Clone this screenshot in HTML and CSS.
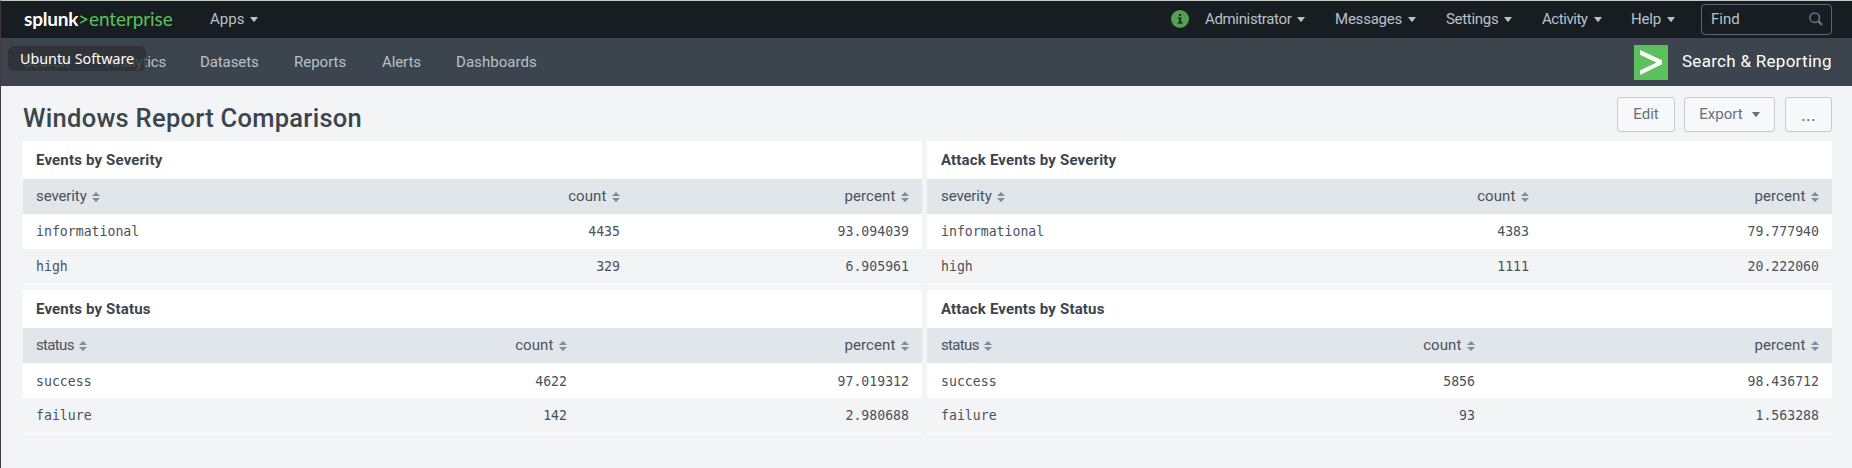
FILE: index.html
```html
<!DOCTYPE html>
<html lang="en">
<head>
<meta charset="utf-8">
<title>Windows Report Comparison</title>
<link rel="stylesheet" href="styles.css">
</head>
<body>
<svg class="defs" width="0" height="0">
  <symbol id="caret" viewBox="0 0 8 5"><path d="M0 0h8L4.6 4.6q-.6.6-1.2 0z"/></symbol>
  <symbol id="sort" viewBox="0 0 8 10"><path d="M0 4h8L4 0zM0 6h8L4 10z"/></symbol>
</svg>
<div class="page">
  <header class="topbar">
    <div class="logo"><span class="logo-brand">splunk</span><span class="logo-mark">&gt;</span><span class="logo-product">enterprise</span></div>
    <a class="menu m-apps"><span>Apps</span><svg class="caret"><use href="#caret"/></svg></a>
    <svg class="info" viewBox="0 0 18 18"><circle cx="9" cy="9" r="9" fill="#53a051"/><path d="M8 4h2.2v2H8zM6.8 7.3h3.5v5h1.2v1.4H6.7v-1.4h1.4V8.7H6.8z" fill="#20302a"/></svg>
    <a class="menu m-admin"><span>Administrator</span><svg class="caret"><use href="#caret"/></svg></a>
    <a class="menu m-messages"><span>Messages</span><svg class="caret"><use href="#caret"/></svg></a>
    <a class="menu m-settings"><span>Settings</span><svg class="caret"><use href="#caret"/></svg></a>
    <a class="menu m-activity"><span>Activity</span><svg class="caret"><use href="#caret"/></svg></a>
    <a class="menu m-help"><span>Help</span><svg class="caret"><use href="#caret"/></svg></a>
    <div class="find"><span>Find</span><svg class="lens" viewBox="0 0 14 14" fill="none" stroke="#6b7785"><circle cx="5.7" cy="5.7" r="4.8" stroke-width="1.5"/><path d="M9.2 9.2L13 13" stroke-width="2.4"/></svg></div>
  </header>
  <nav class="appbar">
    <a class="n-search">Search</a>
    <a class="n-analytics">Analytics</a>
    <a class="n-datasets">Datasets</a>
    <a class="n-reports">Reports</a>
    <a class="n-alerts">Alerts</a>
    <a class="n-dashboards">Dashboards</a>
    <svg class="app-icon" viewBox="0 0 34 35"><path d="M0 0h34v35H0z" fill="#5cc05c"/><path d="M6 5l22 10.3v4L6 30v-4.6l16.5-8L6 9.7z" fill="#fff"/></svg>
    <span class="app-name">Search &amp; Reporting</span>
  </nav>
  <div class="tooltip">Ubuntu Software</div>
  <main class="dashboard">
    <div class="heading">
      <h1>Windows Report Comparison</h1>
      <button class="btn b-edit">Edit</button>
      <button class="btn b-export"><span>Export</span><svg class="caret"><use href="#caret"/></svg></button>
      <button class="btn b-more">...</button>
    </div>
    <div class="panels">
      <section class="panel p-severity">
        <h2>Events by Severity</h2>
        <div class="row head"><span>severity<svg><use href="#sort"/></svg></span><span>count<svg><use href="#sort"/></svg></span><span>percent<svg><use href="#sort"/></svg></span></div>
        <div class="row"><span>informational</span><span>4435</span><span>93.094039</span></div>
        <div class="row alt"><span>high</span><span>329</span><span>6.905961</span></div>
      </section>
      <section class="panel right p-attack-severity">
        <h2>Attack Events by Severity</h2>
        <div class="row head"><span>severity<svg><use href="#sort"/></svg></span><span>count<svg><use href="#sort"/></svg></span><span>percent<svg><use href="#sort"/></svg></span></div>
        <div class="row"><span>informational</span><span>4383</span><span>79.777940</span></div>
        <div class="row alt"><span>high</span><span>1111</span><span>20.222060</span></div>
      </section>
      <section class="panel p-status">
        <h2>Events by Status</h2>
        <div class="row head"><span class="tight">status<svg><use href="#sort"/></svg></span><span>count<svg><use href="#sort"/></svg></span><span>percent<svg><use href="#sort"/></svg></span></div>
        <div class="row low"><span>success</span><span>4622</span><span>97.019312</span></div>
        <div class="row alt"><span>failure</span><span>142</span><span>2.980688</span></div>
      </section>
      <section class="panel right p-attack-status">
        <h2>Attack Events by Status</h2>
        <div class="row head"><span class="tight">status<svg><use href="#sort"/></svg></span><span>count<svg><use href="#sort"/></svg></span><span>percent<svg><use href="#sort"/></svg></span></div>
        <div class="row low"><span>success</span><span>5856</span><span>98.436712</span></div>
        <div class="row alt"><span>failure</span><span>93</span><span>1.563288</span></div>
      </section>
    </div>
  </main>
</div>
</body>
</html>
```

FILE: styles.css
```css
* { box-sizing: border-box; }
body { margin: 0; background: #f2f4f5; font: 15px/20px Roboto, sans-serif; color: #3c444d; }
.defs { position: absolute; }
.page { height: 468px; border-top: 1px solid #c3cbc4; border-left: 1px solid #44373b; overflow: hidden; position: relative; }

.topbar { display: flex; align-items: center; height: 37px; padding: 0 20px 0 22px; background: #171d21; color: #b9c1ca; }
.logo { display: flex; width: 187px; padding-bottom: 2px; font: 19px/24px Lato, sans-serif; white-space: nowrap; }
.logo-brand { width: 55px; padding-left: 1px; color: #fff; font-weight: 700; letter-spacing: -0.2px; }
.logo-mark { width: 11px; color: #5cc05c; }
.logo-product { color: #5cc05c; letter-spacing: -0.1px; }
.menu { display: flex; align-items: center; gap: 6px; white-space: nowrap; letter-spacing: -0.22px; }
.menu span, .find span { padding-bottom: 1px; }
.caret { width: 8px; height: 5px; fill: currentColor; flex: none; }
.menu .caret { margin-bottom: 1px; }
.m-apps { width: 961px; letter-spacing: 0; }
.info { width: 18px; height: 18px; margin: 0 16px 1px 0; flex: none; }
.m-admin { width: 130px; letter-spacing: -0.35px; }
.m-messages { width: 111px; }
.m-settings { width: 96px; letter-spacing: -0.3px; }
.m-activity { width: 89px; letter-spacing: -0.45px; }
.m-help { width: 70px; }
.find { display: flex; align-items: center; justify-content: space-between; width: 131px; height: 31px; padding: 0 8px 0 9px; border: 1px solid #5c6773; border-radius: 4px; }
.lens { width: 14px; height: 14px; margin-bottom: 1px; }

.appbar { display: flex; align-items: center; height: 48px; padding: 0 20px 0 22px; background: #3c444d; color: #b9c1ca; white-space: nowrap; }
.appbar > * { flex: none; }
.n-search { width: 83px; }
.n-analytics { width: 94px; letter-spacing: -0.1px; }
.n-datasets { width: 94px; letter-spacing: -0.1px; }
.n-reports { width: 88px; }
.n-alerts { width: 74px; letter-spacing: -0.1px; }
.n-dashboards { width: 1178px; letter-spacing: 0.05px; }
.app-icon { width: 34px; height: 35px; margin-right: 14px; }
.app-name { color: #fff; font-size: 17px; letter-spacing: 0.28px; padding-bottom: 2px; }
.tooltip { position: absolute; left: 7px; top: 45px; width: 138px; height: 25px; padding: 0 12px; border-radius: 6px; background: rgba(45, 48, 50, .8); color: #fff; font: 14.3px/25px "Noto Sans", sans-serif; white-space: nowrap; }

.dashboard { padding: 0 20px 0 22px; }
.heading { display: flex; height: 55px; padding-top: 11px; }
h1 { flex: 1; margin: 0; padding-top: 1px; font: 500 25.5px/40px Roboto, sans-serif; letter-spacing: 0.28px; }
.btn { display: flex; align-items: center; justify-content: center; gap: 9px; height: 35px; padding: 0 0 1px; border: 1px solid #c3cbd4; border-radius: 3px; background: #f7f8fa; color: #66717d; font: 15px Roboto, sans-serif; }
.b-edit { width: 58px; }
.b-export { width: 91px; margin: 0 10px 0 9px; }
.b-more { width: 47px; font-size: 18px; letter-spacing: 0.2px; }

.panels { display: grid; grid-template-columns: 899px 905px; column-gap: 5px; row-gap: 5px; }
.panel { border-bottom: 1px solid #fff; }
h2 { height: 38px; margin: 0; padding: 0 13px; background: #fff; font: 700 15px/38px Roboto, sans-serif; letter-spacing: 0.17px; }
.row { display: grid; grid-template-columns: 200px var(--count) 1fr; height: 35px; padding: 0 13px; background: #fff; font: 13.2px/36px "DejaVu Sans Mono", monospace; color: #4a525b; text-align: right; }
.row span:first-child { text-align: left; }
.row.alt { background: #f2f4f5; }
.row.low { padding-top: 1px; }
.row.head { background: #e1e6eb; font: 15px/34px Roboto, sans-serif; letter-spacing: 0.1px; }
.row.head span:first-child { letter-spacing: -0.1px; }
.row.head svg { width: 8px; height: 10px; margin: 0 0.5px 0 5px; fill: #818d99; vertical-align: -1px; }
.row.head span.tight { letter-spacing: -0.65px; }
.right h2, .right .row { padding-left: 14px; }
.p-severity { --count: 384px; }
.p-attack-severity { --count: 388px; }
.p-status { --count: 331px; }
.p-attack-status { --count: 334px; }
```
